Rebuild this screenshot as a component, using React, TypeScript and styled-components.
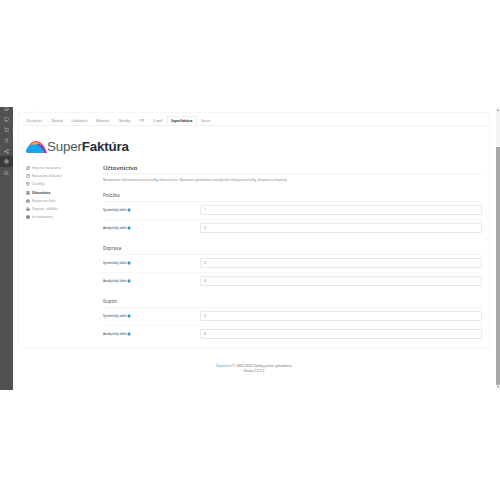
import styled, { createGlobalStyle } from "styled-components";
import {
    Home, Monitor, ShoppingCart, User, Share2, Settings, BarChart3,
    Puzzle, File, Tags, Calculator, Printer, Truck, Cog, Info,
} from "lucide-react";

const GlobalStyle = createGlobalStyle`
    html, body {
        margin: 0;
        padding: 0;
        background: #fff;
        font-family: "Open Sans", "Liberation Sans", sans-serif;
        overflow: hidden;
    }
`;

const tabs = ["Všeobecné", "Obchod", "Lokalizácia", "Možnosti", "Obrázky", "FTP", "E-mail", "SuperFaktúra", "Server"];
const navIcons = [Home, Monitor, ShoppingCart, User, Share2, Settings, BarChart3];

const menu = [
    {label: "Importer nastavenie", icon: Puzzle},
    {label: "Nastavenie dokladov", icon: File},
    {label: "Číselníky", icon: Tags},
    {label: "Účtovníctvo", icon: Calculator, active: true},
    {label: "Nastavenie tlače", icon: Printer},
    {label: "Doprava, súhlášte", icon: Truck},
    {label: "Iné nastavenie", icon: Cog},
];

const groups = [
    {title: "Položka", synth: "1", anal: "2"},
    {title: "Doprava", synth: "3", anal: "4"},
    {title: "Kupón", synth: "5", anal: "6"},
];

function Field({label, value}: {label: string; value: string}) {
    return <FieldRow>
        <FieldLabel>{label} <Info size={4} color="#fff" fill="#1e91cf" strokeWidth={1}/></FieldLabel>
        <Input>{value}</Input>
    </FieldRow>;
}

export default function App() {
    return <Page>
        <GlobalStyle/>
        <Sidebar>
            {navIcons.map((Icon, i) => (
                <NavItem key={i} $active={i === 5}>
                    <Icon size={5} strokeWidth={2}/>
                </NavItem>
            ))}
        </Sidebar>

        <Main>
            <Crumb>·</Crumb>
            <Panel>
                <TabBar>
                    {tabs.map(t => <Tab key={t} $active={t === "SuperFaktúra"}>{t}</Tab>)}
                </TabBar>

                <Logo>
                    <svg width="21" height="12" viewBox="0 0 21 12">
                        <path d="M1 9 C3 3 6 0 10 0 C15 0 19 5 21 12 L15 12 Z" fill="#e8447a"/>
                        <path d="M4 5 C6 2 8 1 10 1 C14 1 17 6 19 12 L14 12 Z" fill="#f7b52c"/>
                        <path d="M12 2.5 C16 3.5 19 7 20.5 12 L17.5 12 C16 8 14 5 10 3.5 Z" fill="#7a45b8"/>
                        <path d="M0 9.5 C1 6 4 3.5 8 3.5 C12 3.5 15 6 17.5 9.5 C18.5 11 17.5 12 16 12 L2.5 12 C0.8 12 -0.3 11 0 9.5 Z" fill="#16a6ef"/>
                    </svg>
                    <LogoText>Super<b>Faktúra</b></LogoText>
                </Logo>

                <Columns>
                    <SideMenu>
                        {menu.map(m => {
                            const Icon = m.icon;
                            return <MenuItem key={m.label} $active={m.active}>
                                <Icon size={4} strokeWidth={2.5}/>
                                {m.label}
                            </MenuItem>;
                        })}
                    </SideMenu>

                    <Content>
                        <Heading>Účtovníctvo</Heading>
                        <Description>
                            Nastavenie účtovníctva pre položky účtovníctvo. Nastavte syntetické a analytické účty pre položky, dopravu a kupóny
                        </Description>
                        {groups.map(g => (
                            <Group key={g.title}>
                                <GroupTitle>{g.title}</GroupTitle>
                                <Field label="Syntetický účet" value={g.synth}/>
                                <Field label="Analytický účet" value={g.anal}/>
                            </Group>
                        ))}
                    </Content>
                </Columns>
            </Panel>

            <Footer>
                <a>OpenCart</a> © 2009-2022 Všetky práva vyhradené.<br/>
                Verzia 2.3.0.2
            </Footer>
        </Main>

        <Scrollbar>
            <Arrow/>
            <ScrollThumb/>
            <Arrow $down/>
        </Scrollbar>
    </Page>;
}

const Page = styled.div`
    width: 500px;
    height: 500px;
    display: flex;
    align-items: flex-start;
    padding-top: 107px;
    box-sizing: border-box;
    overflow: hidden;
`;

const Sidebar = styled.div`
    width: 12.5px;
    height: 283px;
    flex: none;
    background: #515151;
    display: flex;
    flex-direction: column;
    overflow: hidden;
`;

const NavItem = styled.div<{$active?: boolean}>`
    height: 10.6px;
    flex: none;
    display: flex;
    align-items: center;
    justify-content: center;
    color: ${props => props.$active ? "#fff" : "#c4c4c4"};
    background: ${props => props.$active ? "#3a3a3a" : "transparent"};

    &:first-child {
        margin-top: -3.5px;
    }
`;

const Main = styled.div`
    flex: 1;
    min-width: 0;
    padding: 0 6px 0 5.5px;
`;

const Crumb = styled.div`
    height: 5px;
    padding-left: 14px;
    font-size: 4px;
    line-height: 2px;
    color: #666;
`;

const Panel = styled.div`
    border: 1px solid #f6f6f6;
    height: 236px;
    box-sizing: border-box;
    padding: 0 3px;
`;

const TabBar = styled.div`
    display: flex;
    height: 12px;
    border-bottom: 1px solid #f0f0f0;
`;

const Tab = styled.div<{$active?: boolean}>`
    padding: 0 3.5px;
    margin-top: 3px;
    font-size: 3.1px;
    line-height: 9px;
    color: ${props => props.$active ? "#333" : "#777"};
    font-weight: ${props => props.$active ? 700 : 400};
    border: 1px solid ${props => props.$active ? "#f0f0f0" : "transparent"};
    border-bottom: none;
`;

const Logo = styled.div`
    display: flex;
    align-items: center;
    padding: 12px 0 0 4px;
`;

const LogoText = styled.div`
    font-family: "Liberation Sans", sans-serif;
    font-size: 13.4px;
    line-height: 18px;
    letter-spacing: -0.2px;
    color: #4a5a66;

    b {
        color: #1f2d3a;
    }
`;

const Columns = styled.div`
    display: flex;
    margin-top: 7px;
`;

const SideMenu = styled.div`
    width: 81px;
    flex: none;
    padding: 1px 0 0 4px;
    box-sizing: border-box;
`;

const MenuItem = styled.div<{$active?: boolean}>`
    display: flex;
    align-items: center;
    gap: 2px;
    height: 8.2px;
    font-size: 3.1px;
    color: ${props => props.$active ? "#333" : "#888"};
    font-weight: ${props => props.$active ? 700 : 400};

    svg {
        color: #555;
        flex: none;
    }
`;

const Content = styled.div`
    flex: 1;
    min-width: 0;
    padding-right: 4px;
`;

const Heading = styled.div`
    font-size: 6px;
    line-height: 10px;
    font-weight: 600;
    color: #333;
    border-bottom: 1px solid #f0f0f0;
`;

const Description = styled.div`
    font-size: 3.4px;
    line-height: 8px;
    margin-top: 2px;
    color: #777;
    white-space: nowrap;
`;

const Group = styled.div`
    margin-top: 6px;

    & + & {
        margin-top: 7px;
    }
`;

const GroupTitle = styled.div`
    font-size: 4.6px;
    line-height: 10px;
    color: #444;
    padding-bottom: 1px;
    border-bottom: 1px solid #f4f4f4;
`;

const FieldRow = styled.div`
    display: flex;
    align-items: center;
    height: 16.5px;
    border-bottom: 1px solid #f8f8f8;
    box-sizing: content-box;

    &:last-child {
        border-bottom: none;
    }
`;

const FieldLabel = styled.div`
    width: 97px;
    flex: none;
    font-size: 3.2px;
    color: #555;
    font-weight: 600;
    display: flex;
    align-items: center;
    gap: 1px;
`;

const Input = styled.div`
    flex: 1;
    height: 8px;
    line-height: 8px;
    border: 1px solid #e8e8e8;
    border-radius: 1px;
    padding-left: 3px;
    font-size: 3.4px;
    color: #777;
`;

const Footer = styled.div`
    margin-top: 16px;
    text-align: center;
    font-size: 3.4px;
    line-height: 4.5px;
    color: #666;

    a {
        color: #1e91cf;
    }
`;

const Scrollbar = styled.div`
    width: 4px;
    height: 283px;
    flex: none;
    background: #f5f5f5;
    display: flex;
    flex-direction: column;
    align-items: center;
    justify-content: space-between;
    padding: 2px 0;
    box-sizing: border-box;
`;

const Arrow = styled.div<{$down?: boolean}>`
    width: 0;
    height: 0;
    border-left: 1.5px solid transparent;
    border-right: 1.5px solid transparent;
    ${props => props.$down ? "border-top: 2px solid #777;" : "border-bottom: 2px solid #777;"}
`;

const ScrollThumb = styled.div`
    width: 100%;
    height: 238px;
    margin-top: 34px;
    background: #a8a8a8;
`;
